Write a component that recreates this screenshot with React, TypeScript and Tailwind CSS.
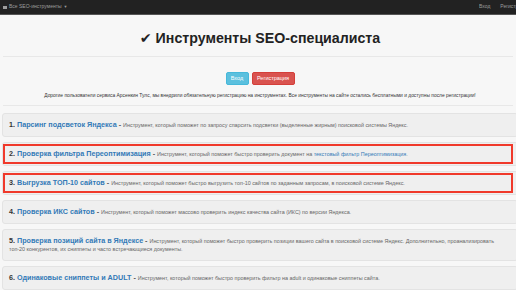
import React from 'react';

type Tool = {
    num: number;
    title: string;
    desc: React.ReactNode;
    marked?: boolean;
};

const tools: Tool[] = [
    { num: 1, title: 'Парсинг подсветок Яндекса', desc: 'Инструмент, который поможет по запросу спарсить подсветки (выделенные жирным) поисковой системы Яндекс.' },
    {
        num: 2,
        title: 'Проверка фильтра Переоптимизация',
        desc: (
            <>
                Инструмент, который поможет быстро проверить документ на{' '}
                <span className="text-[#337ab7]">текстовый фильтр Переоптимизация</span>.
            </>
        ),
        marked: true,
    },
    { num: 3, title: 'Выгрузка ТОП-10 сайтов', desc: 'Инструмент, который поможет быстро выгрузить топ-10 сайтов по заданным запросам, в поисковой системе Яндекс.', marked: true },
    { num: 4, title: 'Проверка ИКС сайтов', desc: 'Инструмент, который поможет массово проверить индекс качества сайта (ИКС) по версии Яндекса.' },
    { num: 5, title: 'Проверка позиций сайта в Яндексе', desc: 'Инструмент, который поможет быстро проверить позиции вашего сайта в поисковой системе Яндекс. Дополнительно, проанализировать топ-20 конкурентов, их сниппеты и часто встречающиеся документы.' },
    { num: 6, title: 'Одинаковые сниппеты и ADULT', desc: 'Инструмент, который поможет быстро проверить фильтр на adult и одинаковые сниппеты сайта.' },
];

const ToolRow: React.FC<{ tool: Tool }> = ({ tool }) => (
    <div className="relative w-[516px] rounded-[3px] border border-[#e3e3e3] bg-[#efefef] py-[7px] pl-[6px] pr-[14px] text-[7.2px] leading-[8px]">
        <span className="font-bold text-[#333]">{tool.num}. </span>
        <span className="font-bold text-[#337ab7]">{tool.title}</span>
        <span className="font-bold text-[#555]"> - </span>
        <span className="text-[5.4px] text-[#666]">{tool.desc}</span>
        {tool.marked && (
            <div className="pointer-events-none absolute inset-y-[1px] left-0 right-[4px] border-2 border-[#f0392b]" />
        )}
    </div>
);

export default function App() {
    return (
        <div className="h-[290px] w-[516px] overflow-hidden bg-[#f7f7f7] font-['Liberation_Sans',Arial,sans-serif]">
            {/* navbar */}
            <div className="flex h-[15px] items-center justify-between border-b border-[#555] bg-[#222] pl-[3px] text-[5px] text-[#9d9d9d]">
                <div className="flex items-center gap-[2px]">
                    <span className="inline-block h-[3px] w-[4px] bg-[#9d9d9d]" />
                    <span>Все SEO-инструменты</span>
                    <span className="text-[4px]">▼</span>
                </div>
                <div className="flex w-[37px] shrink-0 gap-[10px] overflow-hidden whitespace-nowrap">
                    <span>Вход</span>
                    <span>Регистрация</span>
                </div>
            </div>

            {/* header */}
            <div className="flex h-[41px] items-center justify-center pl-[4px] pt-[6px]">
                <h1 className="text-[14.2px] font-bold text-[#222]">
                    <span className="font-['DejaVu_Sans']">✔</span> Инструменты SEO-специалиста
                </h1>
            </div>
            <div className="mx-[3px] border-t border-[#e8e8e8]" />

            <div className="flex justify-center gap-[3px] pl-[4px] pt-[15px]">
                <button className="h-[13px] w-[23px] rounded-[2px] border border-[#46b8da] bg-[#5bc0de] text-[5.5px] text-white">Вход</button>
                <button className="h-[13px] w-[43px] rounded-[2px] border border-[#d43f3a] bg-[#d9534f] text-[5.5px] text-white">Регистрация</button>
            </div>
            <p className="pl-[4px] pt-[8px] text-center text-[4.9px] leading-[6px] text-[#333]">
                Дорогие пользователи сервиса Арсенкин Тулс, мы внедрили обязательную регистрацию на инструментах. Все инструменты на сайте остались бесплатными и доступны после регистрации!
            </p>
            <div className="mx-[3px] mt-[6px] border-t border-[#e8e8e8]" />

            {/* tools */}
            <div className="flex flex-col gap-[5px] pl-[2px] pt-[7px]">
                {tools.map(t => (
                    <ToolRow key={t.num} tool={t} />
                ))}
            </div>
        </div>
    );
}
